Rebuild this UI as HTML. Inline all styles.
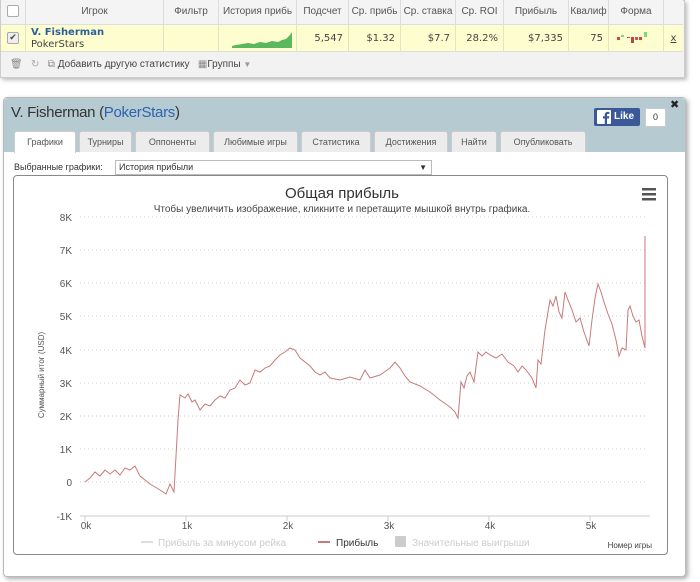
<!DOCTYPE html>
<html><head><meta charset="utf-8"><style>
body{margin:0;width:700px;height:582px;background:#fff;font-family:"Liberation Sans","DejaVu Sans",sans-serif;position:relative;overflow:hidden}
.a{position:absolute}
.top{left:0;top:0;width:683px;height:76px;border:1px solid #ccc;background:#f2f2f2;box-shadow:2px 2px 4px #bbb}
.hd{top:0;height:24px;font-size:10px;color:#555;line-height:24px;text-align:center;border-right:1px solid #ddd;background:#f4f4f4;border-bottom:1px solid #ddd;white-space:nowrap;overflow:hidden}
.dt{top:25px;height:27px;font-size:10px;color:#444;line-height:27px;text-align:right;border-right:1px solid #e4e4c4;background:#fdfdd0;border-bottom:1px solid #ddd;box-sizing:border-box;padding-right:5px;font-family:"DejaVu Sans",sans-serif}
.p{left:3px;top:97px;width:681px;height:478px;background:#fff;border:1px solid #bbb;border-radius:4px;box-shadow:2px 2px 5px #aaa}
.tab{top:131px;height:21px;background:#ececec;border:1px solid #ccc;border-bottom:none;font-size:9px;color:#555;line-height:21px;text-align:center;border-radius:3px 3px 0 0;box-sizing:border-box}
</style></head><body>
<div class="a top"></div>
<div class="a hd" style="left:1px;width:24px"><span style="display:inline-block;width:10px;height:10px;border:1px solid #aaa;background:#fff;border-radius:2px;vertical-align:middle"></span></div>
<div class="a hd" style="left:26px;width:137px">Игрок</div>
<div class="a hd" style="left:164px;width:54px">Фильтр</div>
<div class="a hd" style="left:219px;width:77px">История прибь</div>
<div class="a hd" style="left:297px;width:51px">Подсчет</div>
<div class="a hd" style="left:349px;width:51px">Ср. прибь</div>
<div class="a hd" style="left:401px;width:54px">Ср. ставка</div>
<div class="a hd" style="left:456px;width:47px">Ср. ROI</div>
<div class="a hd" style="left:504px;width:64px">Прибыль</div>
<div class="a hd" style="left:569px;width:39px">Квалиф</div>
<div class="a hd" style="left:609px;width:54px">Форма</div>
<div class="a hd" style="left:664px;width:19px;border-right:none"></div>
<div class="a dt" style="left:1px;width:25px;text-align:center;padding:0"><span style="display:inline-block;width:10px;height:10px;border:1px solid #aaa;background:#eee;border-radius:2px;vertical-align:middle;font-size:9px;line-height:10px">✔</span></div>
<div class="a dt" style="left:26px;width:138px;text-align:left;line-height:12px;padding:2px 0 0 5px"><b style="color:#2d5f98;font-size:10px">V. Fisherman</b><br>PokerStars</div>
<div class="a dt" style="left:164px;width:55px"></div>
<div class="a dt" style="left:219px;width:78px"><svg class="a" style="left:3px;top:6px" width="72" height="18"><path d="M2 17H8M10 15L14 14L20 13L26 12L32 13L38 11L44 12L50 10L56 11L60 9L64 8L68 4L70 1V17H10Z" fill="#5cb85c"/></svg></div>
<div class="a dt" style="left:297px;width:52px">5,547</div>
<div class="a dt" style="left:349px;width:52px">$1.32</div>
<div class="a dt" style="left:401px;width:55px">$7.7</div>
<div class="a dt" style="left:456px;width:48px">28.2%</div>
<div class="a dt" style="left:504px;width:65px">$7,335</div>
<div class="a dt" style="left:569px;width:40px">75</div>
<div class="a dt" style="left:609px;width:55px"><svg class="a" style="left:8px;top:6px" width="40" height="16"><rect x="0" y="6" width="3" height="3" fill="#c44"/><rect x="4" y="4" width="3" height="2" fill="#7d7"/><rect x="10" y="6" width="3" height="1" fill="#c44"/><rect x="14" y="6" width="3" height="6" fill="#b44"/><rect x="18" y="6" width="3" height="3" fill="#c55"/><rect x="22" y="6" width="3" height="3" fill="#c44"/><rect x="27" y="1" width="3" height="5" fill="#7d7"/></svg></div>
<div class="a dt" style="left:664px;width:19px;text-align:center;padding:0;text-decoration:underline;border-right:none">x</div>
<div class="a" style="left:10px;top:55px;font-size:10px;color:#444;line-height:20px;white-space:nowrap"><span style="color:#888">🗑</span>&nbsp;&nbsp;&nbsp;<span style="color:#aaa">↻</span>&nbsp;&nbsp;&nbsp;<span style="color:#888">⧉</span> Добавить другую статистику&nbsp;&nbsp;&nbsp;<span style="color:#888">▦</span>Группы <span style="color:#999;font-size:8px">▼</span></div>

<div class="a p"></div>
<div class="a" style="left:4px;top:98px;width:681px;height:54px;background:#b6cad1;border-radius:4px 4px 0 0"></div>
<div class="a" style="left:11px;top:104px;font-size:15px;color:#333;letter-spacing:-0.3px">V. Fisherman (<span style="color:#2a63b0">PokerStars</span>)</div>
<div class="a" style="left:594px;top:108px;width:46px;height:18px;background:#3b5998;border-radius:2px"></div>
<svg class="a" style="left:597px;top:110px" width="14" height="14"><rect width="14" height="14" fill="#fff" rx="1"/><path d="M10 14V8.5H12L12.3 6.3H10V5C10 4.3 10.3 3.9 11.2 3.9H12.4V2C12 2 11.4 1.9 10.6 1.9C8.9 1.9 7.8 3 7.8 4.8V6.3H6V8.5H7.8V14Z" fill="#3b5998"/></svg>
<div class="a" style="left:614px;top:108px;color:#fff;font-size:10px;font-weight:bold;line-height:18px">Like</div>
<div class="a" style="left:645px;top:108px;width:19px;height:17px;border:1px solid #ccc;background:#fff;font-size:9px;line-height:17px;text-align:center;color:#333">0</div>
<div class="a" style="left:670px;top:98px;font-size:11px;font-weight:bold;color:#222">✖</div>
<div class="a tab" style="left:14px;width:62px;background:#fff;height:22px">Графики</div>
<div class="a tab" style="left:79px;width:53px">Турниры</div>
<div class="a tab" style="left:135px;width:75px">Оппоненты</div>
<div class="a tab" style="left:213px;width:85px">Любимые игры</div>
<div class="a tab" style="left:301px;width:70px">Статистика</div>
<div class="a tab" style="left:374px;width:74px">Достижения</div>
<div class="a tab" style="left:451px;width:46px">Найти</div>
<div class="a tab" style="left:500px;width:86px">Опубликовать</div>
<div class="a" style="left:14px;top:162px;font-size:9px;color:#333">Выбранные графики:</div>
<div class="a" style="left:115px;top:160px;width:312px;height:13px;border:1px solid #bbb;font-size:9px;line-height:13px;color:#333;padding-left:3px;box-sizing:content-box">История прибыли<span style="position:absolute;right:4px;font-size:8px">▼</span></div>
<div class="a" style="left:13px;top:175px;width:653px;height:378px;border:1px solid #888;border-radius:4px"></div>
<svg class="a" style="left:0;top:0" width="700" height="582" font-family="Liberation Sans, DejaVu Sans, sans-serif">
<text x="342" y="198" font-size="15" fill="#333" text-anchor="middle">Общая прибыль</text>
<text x="342" y="212" font-size="10" fill="#444" text-anchor="middle">Чтобы увеличить изображение, кликните и перетащите мышкой внутрь графика.</text>
<g fill="#555"><rect x="642" y="188" width="14" height="2.5"/><rect x="642" y="193" width="14" height="2.5"/><rect x="642" y="198" width="14" height="2.5"/></g>
<g stroke="#ccc" stroke-dasharray="1,3"><path d="M80 217H645M80 250H645M80 283H645M80 316H645M80 350H645M80 383H645M80 416H645M80 449H645M80 482H645"/></g>
<path d="M80 516H650" stroke="#ccc"/>
<g stroke="#ccc"><path d="M85 516v5M186 516v5M287 516v5M388 516v5M489 516v5M590 516v5"/></g>
<g font-size="10" fill="#555" text-anchor="end"><text x="72" y="221">8K</text><text x="72" y="254">7K</text><text x="72" y="287">6K</text><text x="72" y="320">5K</text><text x="72" y="354">4K</text><text x="72" y="387">3K</text><text x="72" y="420">2K</text><text x="72" y="453">1K</text><text x="72" y="486">0</text><text x="72" y="520">-1K</text></g>
<g font-size="10" fill="#555" text-anchor="middle"><text x="86" y="529">0k</text><text x="187" y="529">1k</text><text x="288" y="529">2k</text><text x="389" y="529">3k</text><text x="490" y="529">4k</text><text x="591" y="529">5k</text></g>
<text transform="translate(44,375) rotate(-90)" font-size="8" fill="#555" text-anchor="middle">Суммарный итог (USD)</text>
<polyline fill="none" stroke="#c87a7a" stroke-width="1" points="85,482 90,478 95,472 100,476 105,470 110,474 115,470 120,475 125,468 130,470 135,466 140,476 150,484 160,490 166,494 170,484 174,492 178,420 180,395 185,398 188,394 192,402 195,400 200,410 205,404 210,406 215,400 220,396 225,398 230,390 235,388 240,380 245,385 250,383 255,370 260,372 265,368 270,366 275,360 280,355 285,352 290,348 295,350 300,358 305,362 310,366 315,372 320,375 325,372 330,378 340,380 350,377 360,380 365,370 370,378 380,375 390,368 395,362 400,368 405,376 410,382 420,386 430,392 440,400 450,407 455,412 458,418 461,382 464,388 467,376 470,372 474,382 478,352 482,356 486,352 490,355 496,358 502,354 508,362 514,366 518,372 522,366 526,370 532,378 536,388 538,360 541,364 545,330 550,300 553,306 556,296 559,312 562,318 565,292 568,300 572,310 576,322 580,318 584,332 589,346 592,320 595,298 598,284 601,292 604,302 608,314 612,324 616,340 619,356 622,348 626,350 628,310 630,306 633,316 636,322 639,320 642,336 645,348 645,236"/>
<g font-size="10">
<path d="M141 542h12" stroke="#ddd" stroke-width="2"/><text x="158" y="546" fill="#ccc">Прибыль за минусом рейка</text>
<path d="M318 542h12" stroke="#c87a7a" stroke-width="2"/><text x="336" y="546" fill="#333">Прибыль</text>
<rect x="395" y="536" width="11" height="11" fill="#ccc" rx="1"/><text x="412" y="546" fill="#ccc">Значительные выигрыши</text>
<text x="652" y="548" font-size="8" fill="#444" text-anchor="end">Номер игры</text>
</g>
</svg>
</body></html>
